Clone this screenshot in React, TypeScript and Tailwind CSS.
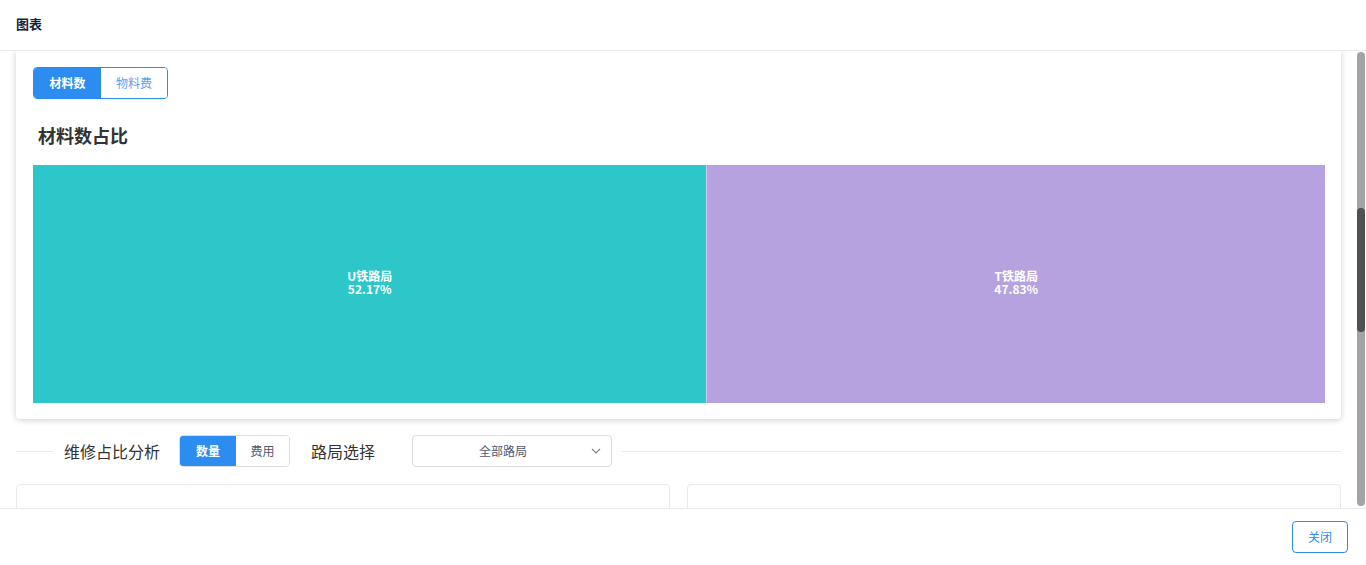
import React from "react";

const font = { fontFamily: '"Noto Sans CJK SC", "Noto Sans", sans-serif' };

function Treemap() {
  const cells = [
    { name: "U铁路局", pct: "52.17%", grow: 674, color: "bg-[#2ec7c9]" },
    { name: "T铁路局", pct: "47.83%", grow: 618, color: "bg-[#b6a2de]" },
  ];
  return (
    <div className="flex h-[238px] w-full">
      {cells.map((c, i) => (
        <div
          key={c.name}
          className={`${c.color} flex flex-col items-center justify-center pb-[5px] text-[12px] font-semibold leading-[13px] text-white ${i > 0 ? "border-l border-white/40" : ""}`}
          style={{ flexGrow: c.grow, flexBasis: 0 }}
        >
          <span>{c.name}</span>
          <span>{c.pct}</span>
        </div>
      ))}
    </div>
  );
}

export default function App() {
  return (
    <div className="flex h-[565px] w-[1366px] flex-col overflow-hidden bg-white" style={font}>
      <header className="flex h-[51px] shrink-0 items-center border-b border-[#e8eaec] px-4 pb-[2px]">
        <h1 className="text-[13px] font-bold text-[#17233d]">图表</h1>
      </header>

      <div className="flex min-h-0 flex-1">
        <div className="min-w-0 flex-1 overflow-hidden pl-4 pr-[11px]">
          <section className="rounded-b-[4px] bg-white pb-[16px] pl-[17px] pr-[16px] pt-[16px] shadow-[0_1px_6px_rgba(0,0,0,0.2)]">
            <div className="flex h-8 w-[135px] overflow-hidden rounded-[4px] border border-[#2d8cf0] text-[12px]">
              <button className="w-[67px] bg-[#2d8cf0] font-bold text-white">材料数</button>
              <button className="flex-1 bg-white text-[#57a3f3]">物料费</button>
            </div>
            <h2 className="mb-[17px] mt-[23px] pl-[5px] text-[18px] font-bold leading-[26px] text-[#333]">
              材料数占比
            </h2>
            <Treemap />
          </section>

          <div className="mt-[16px] flex h-8 items-center">
            <div className="h-px w-[37px] bg-[#e8eaec]" />
            <span className="ml-[11px] mr-[20px] text-[16px] text-[#333]">维修占比分析</span>
            <div className="-ml-px flex h-8 w-[111px] overflow-hidden rounded-[4px] border border-[#dcdee2] text-[12px]">
              <button className="w-[56px] bg-[#2d8cf0] font-bold text-white">数量</button>
              <button className="flex-1 bg-white text-[#515a6e]">费用</button>
            </div>
            <span className="ml-[21px] text-[16px] text-[#333]">路局选择</span>
            <div className="relative ml-[37px] flex h-8 w-[200px] items-center justify-center rounded-[4px] border border-[#dcdee2] text-[12px] text-[#515a6e]">
              <span className="-ml-[18px]">全部路局</span>
              <svg
                className="absolute right-[10px] top-1/2 -translate-y-1/2"
                width="10"
                height="6"
                viewBox="0 0 10 6"
                fill="none"
                stroke="#808695"
                strokeWidth="1.2"
              >
                <path d="M1 1l4 4 4-4" />
              </svg>
            </div>
            <div className="ml-[10px] h-px flex-1 bg-[#e8eaec]" />
          </div>

          <div className="mt-[17px] grid grid-cols-2 gap-[17px]">
            <div className="h-[80px] rounded-[4px] border border-[#e8eaec]" />
            <div className="h-[80px] rounded-[4px] border border-[#e8eaec]" />
          </div>
        </div>

        <div className="flex w-[14px] shrink-0 justify-end pb-[2px] pr-px pt-px">
          <div className="flex w-[8px] flex-col overflow-hidden rounded-full bg-[#a3a3a3]">
            <div className="h-[156px]" />
            <div className="h-[124px] rounded-full bg-[#505050]" />
          </div>
        </div>
      </div>

      <footer className="flex h-[57px] shrink-0 items-center justify-end border-t border-[#e8eaec] pr-[18px]">
        <button className="h-[32px] w-[56px] rounded-[4px] border border-[#2d8cf0] text-[12px] text-[#2d8cf0]">
          关闭
        </button>
      </footer>
    </div>
  );
}
